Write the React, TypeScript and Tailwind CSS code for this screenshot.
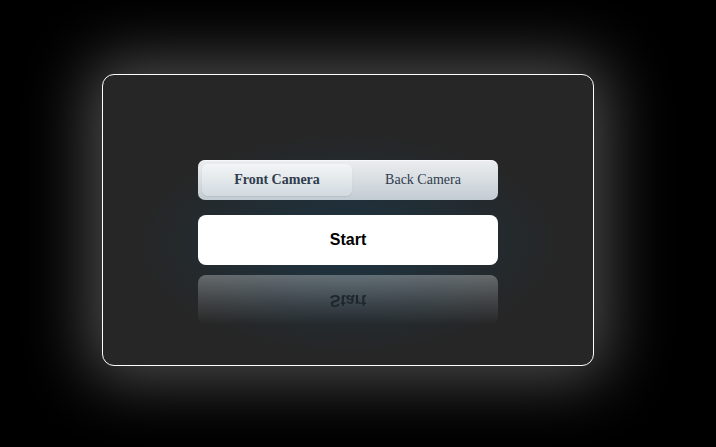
import React from "react";

export default function App() {
  return (
    <div className="w-[716px] h-[447px] bg-black overflow-hidden pl-[102px] pt-[74px]">
      <div
        className="w-[492px] h-[292px] rounded-[12px] border border-white shadow-[0_0_64px_14px_rgba(255,255,255,0.3)] bg-[#262626] bg-[radial-gradient(ellipse_210px_110px_at_50%_58%,rgba(28,54,70,0.9),rgba(38,38,38,0)_100%)] flex flex-col items-center pt-[85px]"
      >
        <div className="w-[300px] flex flex-col">
          <div className="h-[40px] rounded-[7px] bg-gradient-to-b from-[#eceef0] to-[#c3ccd3] p-[4px] flex shadow-[inset_0_1px_0_rgba(255,255,255,0.6)]">
            <div className="w-[150px] h-[32px] pb-[2px] rounded-[6px] bg-gradient-to-b from-[#f3f5f6] to-[#d2dae0] shadow-[0_1px_1px_rgba(0,0,0,0.08)] flex items-center justify-center font-['Liberation_Serif',serif] font-bold text-[14px] text-[#2f3c4c]">
              Front Camera
            </div>
            <div className="flex-1 h-[32px] pb-[2px] flex items-center justify-center font-['Liberation_Serif',serif] text-[14px] text-[#2f3c4c]">
              Back Camera
            </div>
          </div>
          <div className="mt-[15px] h-[50px] rounded-[8px] bg-white flex items-center justify-center font-['Liberation_Sans',Arial,sans-serif] font-bold text-[16px] text-black">
            Start
          </div>
          <div className="mt-[10px] h-[50px] [mask-image:linear-gradient(to_bottom,rgba(0,0,0,0.3)_0%,rgba(0,0,0,0.12)_55%,rgba(0,0,0,0)_100%)]">
            <div className="h-[50px] rounded-[8px] bg-white flex items-center justify-center font-['Liberation_Sans',Arial,sans-serif] font-bold text-[16px] text-black -scale-y-100">
              Start
            </div>
          </div>
        </div>
      </div>
    </div>
  );
}
